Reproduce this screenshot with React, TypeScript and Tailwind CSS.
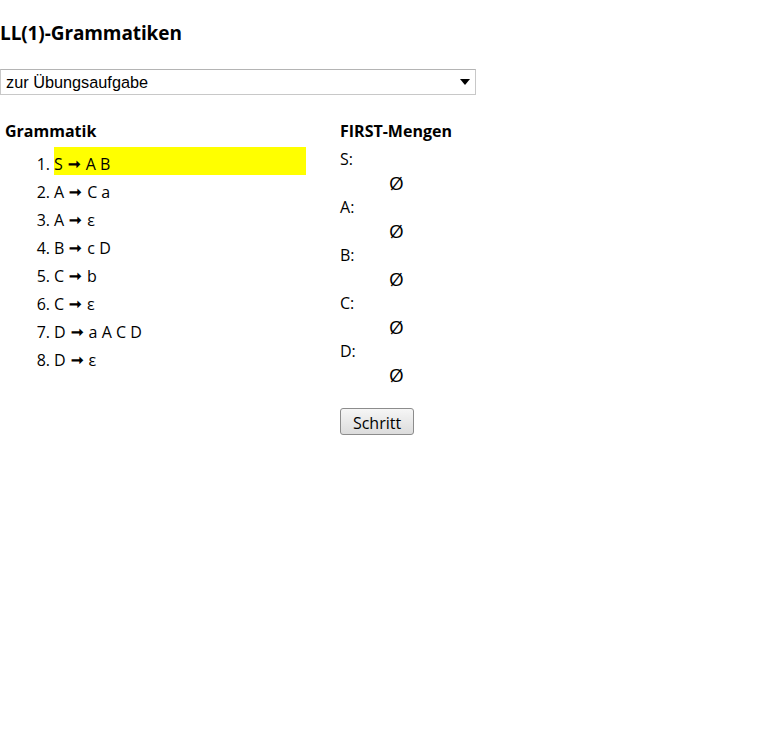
import { ChangeEvent, useState } from 'react';

const rules = [
  { lhs: 'S', rhs: 'A B' },
  { lhs: 'A', rhs: 'C a' },
  { lhs: 'A', rhs: 'ε' },
  { lhs: 'B', rhs: 'c D' },
  { lhs: 'C', rhs: 'b' },
  { lhs: 'C', rhs: 'ε' },
  { lhs: 'D', rhs: 'a A C D' },
  { lhs: 'D', rhs: 'ε' },
];

const nonterminals = ['S', 'A', 'B', 'C', 'D'];

export default function App() {
  const [task, setTask] = useState('uebung');
  const [step, setStep] = useState(0);

  return (
    <div className="min-h-[730px] bg-white text-black font-['Open_Sans','Noto_Sans',sans-serif]">
      <h1 className="pt-[19px] text-[19px] font-bold leading-[28px] tracking-[-0.1px]">LL(1)-Grammatiken</h1>

      <div className="relative mt-[22px] w-[476px]">
        <select
          value={task}
          onChange={(e: ChangeEvent<HTMLSelectElement>) => setTask(e.target.value)}
          className="block h-[26px] w-full appearance-none border border-[#c8c8c8] border-t-[#b4b4b4] bg-white pl-[5px] font-['Liberation_Sans',Arial,sans-serif] text-[16.3px] leading-[24px]"
        >
          <option value="uebung">zur Übungsaufgabe</option>
          <option value="beispiel">zum Beispiel</option>
        </select>
        <svg
          className="pointer-events-none absolute right-[6px] top-[10px]"
          width="10"
          height="6"
          viewBox="0 0 10 6"
        >
          <path d="M0 0h10L5 6z" fill="#000" />
        </svg>
      </div>

      <div className="mt-[24px] flex">
        <div className="w-[340px] pl-[5px]">
          <h2 className="text-[16px] font-bold leading-[24px]">Grammatik</h2>
          <ol className="mt-[4px] pl-[29px]">
            {rules.map((r, i) => (
              <li key={i} className="flex h-[28px] items-center text-[16px]">
                <span className="w-[20px] pr-[4px] pt-[5px] text-right">{i + 1}.</span>
                <span className={`flex h-[28px] w-[252px] items-center pt-[5px] ${i === step ? 'bg-[#ffff00]' : ''}`}>
                  {r.lhs} <span className="mx-[5px] text-[15px] font-bold">➞</span> {r.rhs}
                </span>
              </li>
            ))}
          </ol>
        </div>

        <div>
          <h2 className="text-[16px] font-bold leading-[24px]">FIRST-Mengen</h2>
          <dl className="mt-[4px] text-[16px] leading-[24px]">
            {nonterminals.map((n) => (
              <div key={n}>
                <dt>{n}:</dt>
                <dd className="pl-[49px] text-[19px]">Ø</dd>
              </div>
            ))}
          </dl>
          <button
            type="button"
            onClick={() => setStep((s) => (s + 1) % rules.length)}
            className="mt-[21px] h-[27px] w-[74px] rounded-[3px] border border-[#8c8c8c] bg-gradient-to-b from-[#f6f6f6] to-[#dcdcdc] pt-[2px] text-[16px] leading-[24px]"
          >
            Schritt
          </button>
        </div>
      </div>
    </div>
  );
}
